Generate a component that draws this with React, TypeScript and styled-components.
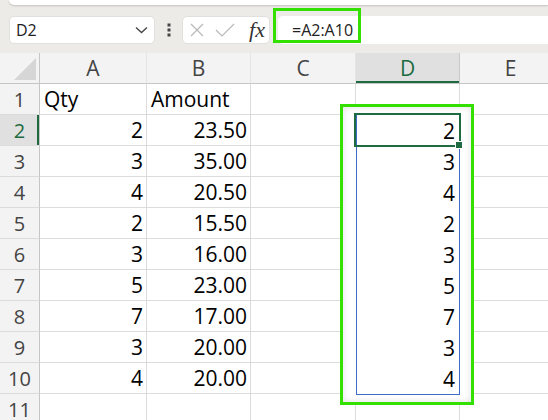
import React from 'react';
import styled, { createGlobalStyle } from 'styled-components';

const GlobalStyle = createGlobalStyle`
  body {
    margin: 0;
    background: #ecebe8;
    font-family: 'Open Sans', 'Noto Sans', sans-serif;
  }
`;

const COLUMNS = ['A', 'B', 'C', 'D', 'E'];

const ROWS: string[][] = [
  ['Qty', 'Amount'],
  ['2', '23.50'],
  ['3', '35.00'],
  ['4', '20.50'],
  ['2', '15.50'],
  ['3', '16.00'],
  ['5', '23.00'],
  ['7', '17.00'],
  ['3', '20.00'],
  ['4', '20.00'],
  ['', ''],
];

const SPILL = ['2', '3', '4', '2', '3', '5', '7', '3', '4'];

const HIGHLIGHT = '#33e000';
const EXCEL_GREEN = '#1e6b41';

const Page = styled.div`
  width: 548px;
  height: 420px;
  overflow: hidden;
  background: #ecebe8;
`;

const TopStrip = styled.div`
  height: 5px;
  margin-left: 9px;
  background: #fff;
  border-bottom-left-radius: 6px;
  box-shadow: 0 1px 2px rgba(0, 0, 0, 0.18);
`;

const Toolbar = styled.div`
  display: flex;
  align-items: center;
  height: 28px;
  padding: 11px 0 9px 9px;
`;

const NameBox = styled.div`
  display: flex;
  align-items: center;
  justify-content: space-between;
  box-sizing: border-box;
  width: 146px;
  height: 28px;
  padding: 0 6px 0 6px;
  background: #fff;
  border: 1px solid #e2e0dc;
  border-radius: 5px;
  font-size: 16px;
  color: #222;
`;

const Kebab = styled.div`
  display: flex;
  justify-content: center;
  width: 27px;
`;

const FxBox = styled.div`
  display: flex;
  align-items: center;
  box-sizing: border-box;
  width: 88px;
  height: 28px;
  padding: 0 4px 0 6px;
  gap: 10px;
  background: #fff;
  border: 1px solid #e2e0dc;
  border-radius: 5px;
`;

const FxLabel = styled.span`
  margin-left: auto;
  font-family: 'Liberation Serif', 'DejaVu Serif', serif;
  font-style: italic;
  font-size: 22px;
  line-height: 1;
  color: #333;
`;

const FormulaBox = styled.div`
  position: relative;
  flex: 1;
  display: flex;
  align-items: center;
  height: 28px;
  margin-left: 8px;
  padding-left: 14px;
  background: #fff;
  border-radius: 5px 0 0 5px;
  font-size: 16px;
  color: #222;
`;

const FormulaHighlight = styled.div`
  position: absolute;
  left: -5px;
  top: -8px;
  width: 88px;
  height: 35px;
  box-sizing: border-box;
  border: 3px solid ${HIGHLIGHT};
`;

const Sheet = styled.div`
  position: relative;
  display: grid;
  grid-template-columns: 40px 107px 104px 105px 104px 102px;
  grid-auto-rows: 31px;
  background: #fff;
`;

const Corner = styled.div`
  display: flex;
  align-items: flex-end;
  justify-content: flex-end;
  padding: 0 3px 3px 0;
  background: #f3f3f3;
  border-right: 1px solid #c6c6c6;
  border-bottom: 1px solid #c6c6c6;
`;

const ColumnHeader = styled.div<{ $selected?: boolean }>`
  display: flex;
  align-items: center;
  justify-content: center;
  background: ${(p) => (p.$selected ? '#e0e0e0' : '#f3f3f3')};
  border-right: 1px solid ${(p) => (p.$selected ? '#c8c8c8' : '#e4e4e4')};
  border-bottom: 1px solid #c6c6c6;
  box-shadow: ${(p) => (p.$selected ? `inset 0 -2px 0 ${EXCEL_GREEN}` : 'none')};
  font-size: 21px;
  color: ${(p) => (p.$selected ? EXCEL_GREEN : '#444')};
`;

const RowHeader = styled.div<{ $selected?: boolean }>`
  display: flex;
  align-items: center;
  justify-content: center;
  background: ${(p) => (p.$selected ? '#e0e0e0' : '#f3f3f3')};
  border-right: 1px solid #c6c6c6;
  border-bottom: 1px solid #dcdcdc;
  box-shadow: ${(p) => (p.$selected ? `inset -2px 0 0 ${EXCEL_GREEN}` : 'none')};
  font-size: 20px;
  color: ${(p) => (p.$selected ? EXCEL_GREEN : '#444')};
`;

const Cell = styled.div<{ $numeric?: boolean }>`
  display: flex;
  align-items: center;
  justify-content: ${(p) => (p.$numeric ? 'flex-end' : 'flex-start')};
  padding: 0 3px 0 4px;
  border-right: 1px solid #dcdcdc;
  border-bottom: 1px solid #dcdcdc;
  font-size: 21px;
  color: #000;
  white-space: nowrap;
`;

const SpillPanel = styled.div`
  position: absolute;
  left: 340px;
  top: 51px;
  width: 134px;
  height: 301px;
  box-sizing: border-box;
  padding: 8px 0 0 13px;
  background: #fff;
  border: 3px solid ${HIGHLIGHT};
  box-shadow: inset 0 0 7px rgba(0, 0, 0, 0.13);
`;

const SpillRange = styled.div`
  position: relative;
  width: 104px;
  box-sizing: border-box;
  border: 1px solid #3f6cc4;
  border-top: none;
`;

const SpillCell = styled.div`
  display: flex;
  align-items: center;
  justify-content: flex-end;
  height: 31px;
  padding-right: 4px;
  font-size: 21px;
  color: #000;
`;

const ActiveCell = styled.div`
  position: absolute;
  left: -3px;
  top: -2px;
  width: 107px;
  height: 34px;
  box-sizing: border-box;
  border: 2px solid ${EXCEL_GREEN};
`;

const FillHandle = styled.span`
  position: absolute;
  right: -4px;
  bottom: -4px;
  width: 6px;
  height: 6px;
  background: ${EXCEL_GREEN};
  border: 1px solid #fff;
`;

const Chevron = () => (
  <svg width="13" height="8" viewBox="0 0 13 8">
    <path d="M1 1.5 L6.5 6.5 L12 1.5" fill="none" stroke="#444" strokeWidth="1.3" />
  </svg>
);

const Dots = () => (
  <svg width="4" height="14" viewBox="0 0 4 14">
    <rect x="0.5" y="0.5" width="3" height="3" fill="#444" />
    <rect x="0.5" y="5.5" width="3" height="3" fill="#444" />
    <rect x="0.5" y="10.5" width="3" height="3" fill="#444" />
  </svg>
);

const CancelIcon = () => (
  <svg width="16" height="14" viewBox="0 0 16 14">
    <path d="M2 1 L14 13 M14 1 L2 13" stroke="#b9b9b9" strokeWidth="1.2" />
  </svg>
);

const ConfirmIcon = () => (
  <svg width="20" height="14" viewBox="0 0 20 14">
    <path d="M1 7 L7 13 L19 1" fill="none" stroke="#b9b9b9" strokeWidth="1.2" />
  </svg>
);

const SelectAll = () => (
  <svg width="22" height="22" viewBox="0 0 22 22">
    <polygon points="22,0 22,22 0,22" fill="#d6d6d6" />
  </svg>
);

const App = () => {
  return (
    <Page>
      <GlobalStyle />
      <TopStrip />
      <Toolbar>
        <NameBox>
          <span>D2</span>
          <Chevron />
        </NameBox>
        <Kebab>
          <Dots />
        </Kebab>
        <FxBox>
          <CancelIcon />
          <ConfirmIcon />
          <FxLabel>fx</FxLabel>
        </FxBox>
        <FormulaBox>
          =A2:A10
          <FormulaHighlight />
        </FormulaBox>
      </Toolbar>

      <Sheet>
        <Corner>
          <SelectAll />
        </Corner>
        {COLUMNS.map((col) => (
          <ColumnHeader key={col} $selected={col === 'D'}>
            {col}
          </ColumnHeader>
        ))}
        {ROWS.map((row, i) => (
          <React.Fragment key={i}>
            <RowHeader $selected={i === 1}>{i + 1}</RowHeader>
            <Cell $numeric={i > 0}>{row[0]}</Cell>
            <Cell $numeric={i > 0}>{row[1]}</Cell>
            <Cell />
            <Cell />
            <Cell />
          </React.Fragment>
        ))}

        <SpillPanel>
          <SpillRange>
            {SPILL.map((v, i) => (
              <SpillCell key={i}>{v}</SpillCell>
            ))}
            <ActiveCell>
              <FillHandle />
            </ActiveCell>
          </SpillRange>
        </SpillPanel>
      </Sheet>
    </Page>
  );
};

export default App;
